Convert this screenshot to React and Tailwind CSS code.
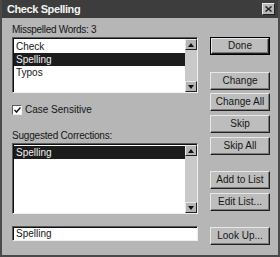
import React from 'react';

function Btn({ label, isDefault, className }) {
    return (
        <div className={`${className} h-[18px] w-[60px] ${isDefault ? 'border border-black' : ''}`}>
            <div className="h-full w-full border border-t-[#e8e8e8] border-l-[#e8e8e8] border-r-[#202020] border-b-[#202020] shadow-[inset_-1px_-1px_0_#7a7a7a] bg-[#bdbdbd] flex items-center justify-center text-[10px] leading-none text-[#151515]">
                {label}
            </div>
        </div>
    );
}

function ScrollBar() {
    return (
        <div className="w-[12px] h-full flex flex-col bg-[#c9c9c9]">
            <div className="h-[11px] w-[12px] bg-[#b5b5b5] border border-t-[#e8e8e8] border-l-[#e8e8e8] border-r-[#202020] border-b-[#202020] flex items-center justify-center">
                <svg width="6" height="4" viewBox="0 0 6 4"><path d="M0 4 L3 0 L6 4 Z" fill="#111" /></svg>
            </div>
            <div className="flex-1" />
            <div className="h-[11px] w-[12px] bg-[#b5b5b5] border border-t-[#e8e8e8] border-l-[#e8e8e8] border-r-[#202020] border-b-[#202020] flex items-center justify-center">
                <svg width="6" height="4" viewBox="0 0 6 4"><path d="M0 0 L3 4 L6 0 Z" fill="#111" /></svg>
            </div>
        </div>
    );
}

function ListBox({ items, selected, height }) {
    return (
        <div className={`${height} w-[186px] border border-t-[#5a5a5a] border-l-[#5a5a5a] border-r-[#f0f0f0] border-b-[#f0f0f0] shadow-[inset_1px_1px_0_#101010] bg-white flex pt-[1px] pl-[1px]`}>
            <div className="flex-1 flex flex-col pt-[1px]">
                {items.map((item) => (
                    <div
                        key={item}
                        className={`h-[13px] pl-[2px] text-[10px] leading-[13px] ${item === selected ? 'bg-[#1c1c1c] text-[#f2f2f2]' : 'text-[#151515]'}`}
                    >
                        {item}
                    </div>
                ))}
            </div>
            <ScrollBar />
        </div>
    );
}

export default function App() {
    return (
        <div className="w-[280px] h-[257px] bg-[#b6b6b6] border-l-2 border-r-2 border-b-2 border-[#4a4a4a] font-['Liberation_Sans',Arial,sans-serif] overflow-hidden">
            {/* title bar */}
            <div className="h-[18px] bg-[#3d3d3d] flex items-center justify-between pl-[5px] pr-[3px]">
                <span className="text-[11px] font-bold text-[#f4f4f4] tracking-[-0.4px]">Check Spelling</span>
                <div className="w-[13px] h-[12px] bg-[#b8b8b8] border border-t-[#e8e8e8] border-l-[#e8e8e8] border-r-[#202020] border-b-[#202020] flex items-center justify-center">
                    <svg width="7" height="6" viewBox="0 0 7 6"><path d="M0.5 0.5 L6.5 5.5 M6.5 0.5 L0.5 5.5" stroke="#222" strokeWidth="1.5" /></svg>
                </div>
            </div>

            <div className="flex pl-[10px] gap-[12px]">
                {/* left column */}
                <div className="w-[186px] flex flex-col">
                    <div className="mt-[6px] h-[11px] text-[10px] leading-[11px] text-[#151515] tracking-[-0.3px]">Misspelled Words: 3</div>
                    <div className="mt-[2px]">
                        <ListBox items={["Check", "Spelling", "Typos"]} selected="Spelling" height="h-[56px]" />
                    </div>
                    <div className="mt-[11px] h-[12px] flex items-center gap-[3px]">
                        <div className="w-[10px] h-[10px] bg-white border border-t-[#5a5a5a] border-l-[#5a5a5a] border-r-[#f0f0f0] border-b-[#f0f0f0] flex items-center justify-center">
                            <svg width="7" height="6" viewBox="0 0 7 6"><path d="M0.5 3 L2.5 5 L6.5 0.5" stroke="#111" strokeWidth="1.5" fill="none" /></svg>
                        </div>
                        <span className="text-[10px] leading-none text-[#151515]">Case Sensitive</span>
                    </div>
                    <div className="mt-[14px] h-[11px] text-[10px] leading-[11px] text-[#151515] tracking-[-0.2px]">Suggested Corrections:</div>
                    <div className="mt-[2px]">
                        <ListBox items={["Spelling"]} selected="Spelling" height="h-[71px]" />
                    </div>
                    <div className="mt-[12px] h-[15px] w-[186px] border border-t-[#5a5a5a] border-l-[#5a5a5a] border-r-[#f0f0f0] border-b-[#f0f0f0] shadow-[inset_1px_1px_0_#101010] bg-white pl-[3px] text-[10px] leading-[13px] text-[#151515]">
                        Spelling
                    </div>
                </div>

                {/* right column */}
                <div className="w-[60px] flex flex-col">
                    <Btn label="Done" isDefault className="mt-[19px]" />
                    <Btn label="Change" className="mt-[17px]" />
                    <Btn label="Change All" className="mt-[3px]" />
                    <Btn label="Skip" className="mt-[4px]" />
                    <Btn label="Skip All" className="mt-[4px]" />
                    <Btn label="Add to List" className="mt-[16px]" />
                    <Btn label="Edit List..." className="mt-[4px]" />
                    <Btn label="Look Up..." className="mt-[16px]" />
                </div>
            </div>
        </div>
    );
}
